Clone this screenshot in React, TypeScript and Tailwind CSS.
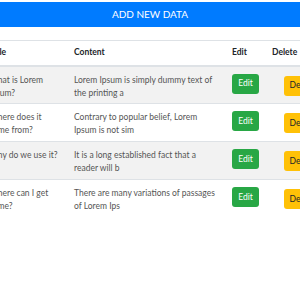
import React from 'react';

interface Row {
  title: string[];
  content: string[];
}

const rows: Row[] = [
  { title: ['What is Lorem', 'Ipsum?'], content: ['Lorem Ipsum is simply dummy text of', 'the printing a'] },
  { title: ['Where does it', 'come from?'], content: ['Contrary to popular belief, Lorem', 'Ipsum is not sim'] },
  { title: ['Why do we use it?'], content: ['It is a long established fact that a', 'reader will b'] },
  { title: ['Where can I get', 'some?'], content: ['There are many variations of passages', 'of Lorem Ips'] },
];

const Lines: React.FC<{ lines: string[] }> = ({ lines }) => (
  <>
    {lines.map((l, i) => (
      <div key={i} className="whitespace-nowrap">{l}</div>
    ))}
  </>
);

const App: React.FC = () => {
  return (
    <div
      className="w-[300px] h-[300px] overflow-hidden bg-white"
      style={{ fontFamily: 'Lato, "Open Sans", sans-serif' }}
    >
      <button className="w-full h-[25px] bg-[#007bff] text-white text-[10px]">
        ADD NEW DATA
      </button>

      <table className="table-fixed w-[345px] mt-[13px] -ml-[11px] border-collapse text-[8.5px] leading-[13px] text-[#555]">
        <thead>
          <tr className="border-t border-[#dee2e6] border-b-2 text-[#212529] font-bold">
            <th className="w-[85px] h-[25px] p-0 text-left align-middle">Title</th>
            <th className="w-[158px] p-0 text-left align-middle">Content</th>
            <th className="w-[40px] p-0 text-left align-middle">Edit</th>
            <th className="w-[62px] p-0 text-left align-middle">Delete</th>
          </tr>
        </thead>
        <tbody>
          {rows.map((r, i) => (
            <tr key={i} className={`h-[38px] border-t border-[#dee2e6] ${i % 2 === 0 ? 'bg-[#f2f2f2]' : 'bg-white'}`}>
              <td className="align-top p-0 pt-[7px]">
                <Lines lines={r.title} />
              </td>
              <td className="align-top p-0 pt-[7px]">
                <Lines lines={r.content} />
              </td>
              <td className="align-top p-0 pt-[7px]">
                <span className="inline-flex items-center justify-center w-[27px] h-[20px] rounded-[3px] bg-[#28a745] text-white text-[8.5px]">
                  Edit
                </span>
              </td>
              <td className="align-top p-0 pt-[9px]">
                <span className="ml-[12px] inline-flex items-center justify-center w-[36px] h-[20px] rounded-[3px] bg-[#ffc107] text-[#212529] text-[8.5px]">
                  Delete
                </span>
              </td>
            </tr>
          ))}
        </tbody>
      </table>
    </div>
  );
};

export default App;
